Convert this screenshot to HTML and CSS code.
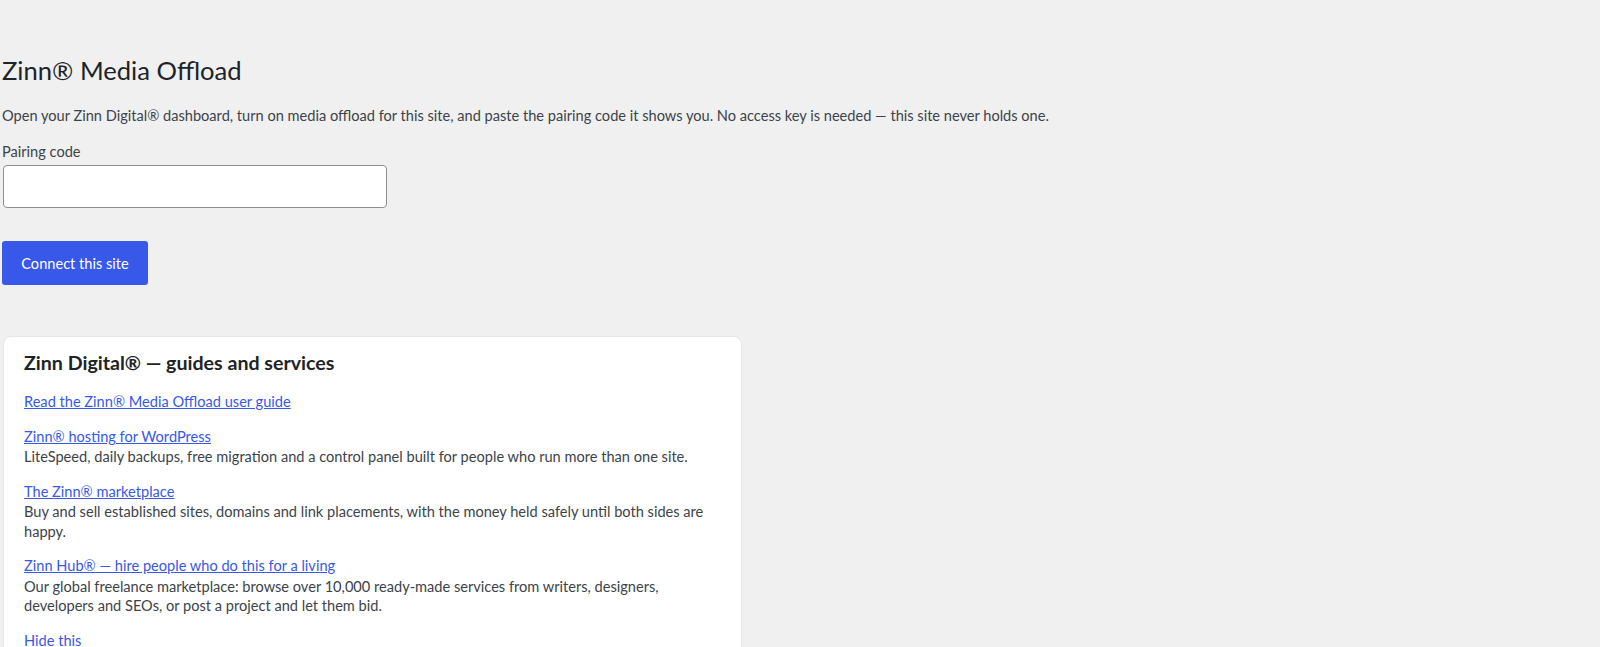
FILE: index.html
```html
<!DOCTYPE html>
<html lang="en">
<head>
<meta charset="utf-8">
<title>Zinn® Media Offload</title>
<link rel="stylesheet" href="styles.css">
</head>
<body>
<div class="wrap">
  <h1 class="title">Zinn® Media Offload</h1>
  <p class="intro">Open your Zinn Digital® dashboard, turn on media offload for this site, and paste the pairing code it shows you. No access key is needed — this site never holds one.</p>
  <label class="field-label" for="pairing">Pairing code</label>
  <input class="field-input" id="pairing" type="text">
  <button class="primary-btn" type="button">Connect this site</button>
  <div class="card">
    <h2 class="card-title">Zinn Digital® — guides and services</h2>
    <div class="card-list">
      <div class="card-item"><a class="card-link" href="#">Read the Zinn® Media Offload user guide</a></div>
      <div class="card-item">
        <a class="card-link" href="#">Zinn® hosting for WordPress</a>
        <div class="card-desc">LiteSpeed, daily backups, free migration and a control panel built for people who run more than one site.</div>
      </div>
      <div class="card-item">
        <a class="card-link" href="#">The Zinn® marketplace</a>
        <div class="card-desc">Buy and sell established sites, domains and link placements, with the money held safely until both sides are happy.</div>
      </div>
      <div class="card-item">
        <a class="card-link" href="#">Zinn Hub® — hire people who do this for a living</a>
        <div class="card-desc">Our global freelance marketplace: browse over 10,000 ready-made services from writers, designers, developers and SEOs, or post a project and let them bid.</div>
      </div>
      <div class="card-item"><a class="card-link" href="#">Hide this</a></div>
    </div>
  </div>
</div>
</body>
</html>
```

FILE: styles.css
```css
html, body {
  margin: 0;
  padding: 0;
  background: #f0f0f0;
}
body {
  font-family: Lato, "Liberation Sans", sans-serif;
  font-size: 14.6px;
  color: #3c434a;
}
.wrap {
  padding: 0 2px;
  display: flex;
  flex-direction: column;
  align-items: flex-start;
}
.title {
  margin: 0;
  padding-top: 53px;
  font-size: 25.6px;
  line-height: 34px;
  font-weight: 400;
  color: #1d2327;
}
.intro {
  margin: 19px 0 0;
  line-height: 20px;
}
.field-label {
  margin-top: 16px;
  line-height: 20px;
}
.field-input {
  margin: 3px 0 0 1px;
  width: 384px;
  height: 43px;
  box-sizing: border-box;
  border: 1px solid #8c8f94;
  border-radius: 4px;
  background: #fff;
  font: inherit;
}
.primary-btn {
  margin-top: 33px;
  width: 146px;
  height: 44px;
  border: none;
  border-radius: 3px;
  background: #3858e9;
  color: #fff;
  font: inherit;
  font-size: 14.6px;
  cursor: pointer;
}
.card {
  margin: 51px 0 0 1px;
  width: 739px;
  box-sizing: border-box;
  background: #fff;
  border: 1px solid #e6e6e6;
  border-radius: 8px;
  padding: 14px 20px 20px;
}
.card-title {
  margin: 0;
  font-size: 19.6px;
  line-height: 24px;
  font-weight: 700;
  color: #1d2327;
}
.card-list {
  margin-top: 17px;
  display: flex;
  flex-direction: column;
  gap: 14.5px;
}
.card-item {
  line-height: 20.4px;
}
.card-link {
  color: #3858e9;
  text-decoration: underline;
}
.card-desc {
  line-height: 19.8px;
}
```
